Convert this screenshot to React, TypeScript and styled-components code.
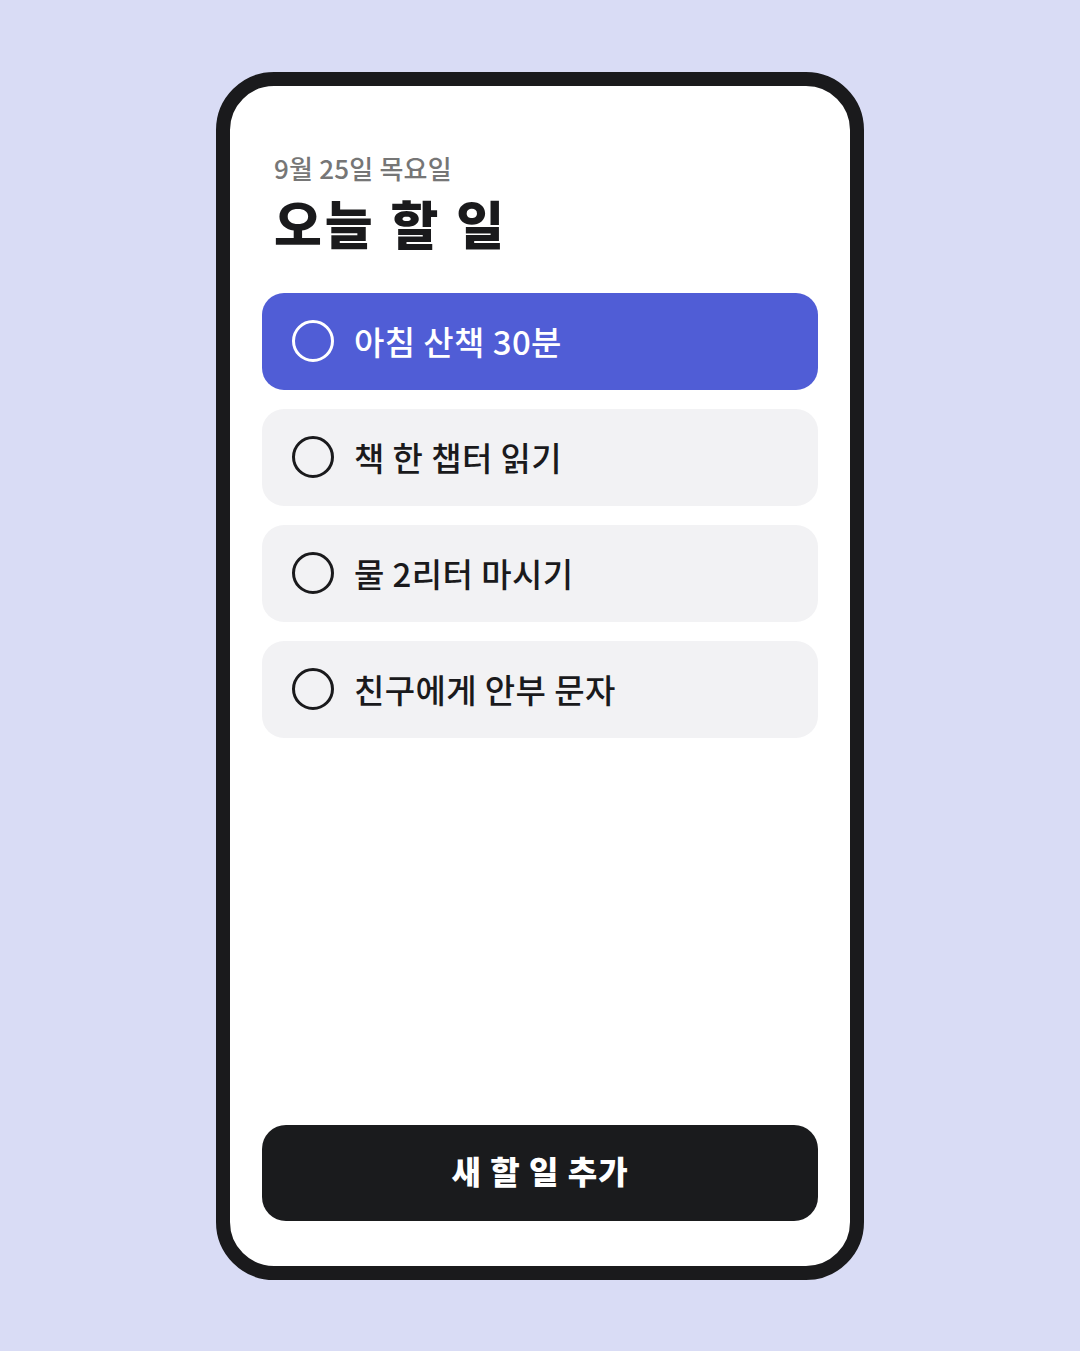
import styled, { createGlobalStyle } from "styled-components";

const GlobalStyle = createGlobalStyle`
  html, body {
    margin: 0;
    padding: 0;
    background: #d9dcf5;
  }
  body {
    font-family: "Noto Sans CJK KR", "Noto Sans", sans-serif;
  }
`;

const Page = styled.main`
  width: 1080px;
  height: 1351px;
  display: flex;
  align-items: center;
  justify-content: center;
  background: #d9dcf5;
`;

const Phone = styled.section`
  box-sizing: border-box;
  width: 648px;
  height: 1208px;
  border: 14px solid #1a1a1c;
  border-radius: 58px;
  background: #ffffff;
  padding: 64px 32px 45px;
  display: flex;
  flex-direction: column;
`;

const Header = styled.header`
  padding-left: 12px;
  margin-bottom: 38px;
`;

const DateText = styled.p`
  margin: 0;
  font-size: 26px;
  line-height: 36px;
  font-weight: 500;
  color: #767676;
  letter-spacing: 0.2px;
`;

const Title = styled.h1`
  margin: 5px 0 0;
  font-size: 52px;
  line-height: 64px;
  font-weight: 900;
  color: #1a1a1c;
  letter-spacing: 3px;
`;

const List = styled.ul`
  list-style: none;
  margin: 0;
  padding: 0;
  display: flex;
  flex-direction: column;
  gap: 19px;
  flex: 1;
`;

const Item = styled.li<{ $active?: boolean }>`
  box-sizing: border-box;
  height: 97px;
  border-radius: 22px;
  padding: 0 30px;
  display: flex;
  align-items: center;
  gap: 20px;
  background: ${(p) => (p.$active ? "#505dd6" : "#f2f2f4")};
  color: ${(p) => (p.$active ? "#ffffff" : "#1a1a1c")};
`;

const Check = styled.span<{ $active?: boolean }>`
  box-sizing: border-box;
  width: 42px;
  height: 42px;
  border-radius: 50%;
  border: 3.5px solid ${(p) => (p.$active ? "#ffffff" : "#1a1a1c")};
  flex-shrink: 0;
`;

const Label = styled.span`
  font-size: 33px;
  font-weight: 500;
  letter-spacing: 0.4px;
`;

const AddButton = styled.button`
  box-sizing: border-box;
  width: 100%;
  height: 96px;
  border: none;
  border-radius: 24px;
  padding: 0 0 6px;
  background: #1a1b1d;
  color: #ffffff;
  font-family: inherit;
  font-size: 32px;
  font-weight: 900;
  letter-spacing: 1px;
  cursor: pointer;
`;

const todos = [
  { text: "아침 산책 30분", active: true },
  { text: "책 한 챕터 읽기" },
  { text: "물 2리터 마시기" },
  { text: "친구에게 안부 문자" },
];

const App = (): JSX.Element => {
  return (
    <>
      <GlobalStyle />
      <Page>
        <Phone>
          <Header>
            <DateText>9월 25일 목요일</DateText>
            <Title>오늘 할 일</Title>
          </Header>
          <List>
            {todos.map((t) => (
              <Item key={t.text} $active={t.active}>
                <Check $active={t.active} />
                <Label>{t.text}</Label>
              </Item>
            ))}
          </List>
          <AddButton>새 할 일 추가</AddButton>
        </Phone>
      </Page>
    </>
  );
};

export default App;
